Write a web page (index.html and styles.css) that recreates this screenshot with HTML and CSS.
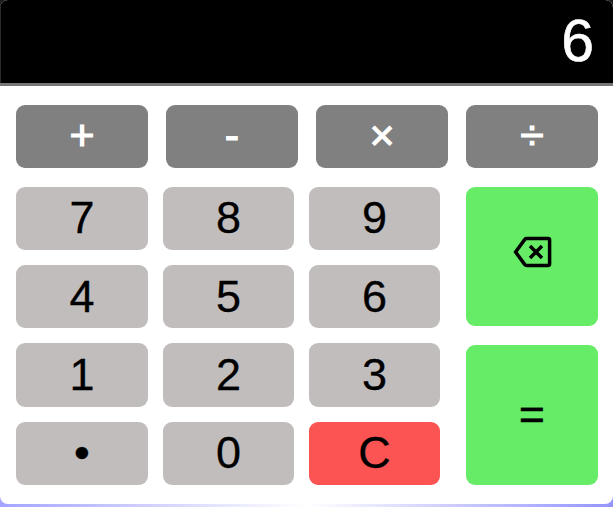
FILE: index.html
```html
<!DOCTYPE html>
<html lang="en">
<head>
<meta charset="utf-8">
<title>Calculator</title>
<link rel="stylesheet" href="styles.css">
</head>
<body>
<main class="calculator">
  <div class="display">6</div>
  <div class="keys">
    <div class="operators">
      <button class="key operator">+</button>
      <button class="key operator">-</button>
      <button class="key operator">×</button>
      <button class="key operator">÷</button>
    </div>
    <div class="pad">
      <div class="digits">
        <button class="key raised">7</button>
        <button class="key raised">8</button>
        <button class="key raised">9</button>
        <button class="key">4</button>
        <button class="key">5</button>
        <button class="key">6</button>
        <button class="key">1</button>
        <button class="key">2</button>
        <button class="key">3</button>
        <button class="key raised">•</button>
        <button class="key raised">0</button>
        <button class="key clear raised">C</button>
      </div>
      <div class="actions">
        <button class="key action" aria-label="Delete">
          <svg class="delete-icon" viewBox="0 0 40 32" fill="none" stroke="#000" stroke-width="3.5">
            <path d="M13.5 2.6H35Q36.6 2.6 36.6 4V28Q36.6 29.4 35 29.4H13.5Q12.5 29.4 11.8 28.6L2.6 16L11.8 3.4Q12.5 2.6 13.5 2.6Z"/>
            <path d="M17 10L29 22M29 10L17 22"/>
          </svg>
        </button>
        <button class="key action raised">=</button>
      </div>
    </div>
  </div>
</main>
</body>
</html>
```
FILE: styles.css
```css
* { box-sizing: border-box; }

body {
  margin: 0;
  height: 507px;
  overflow: hidden;
  background:
    linear-gradient(#1c1c1c, #1c1c1c) 0 0 / 100% 20px no-repeat,
    linear-gradient(90deg, #a4a4ff, #fff 50%, #9494ff);
  font-family: "Liberation Sans", Arial, sans-serif;
}

.calculator {
  height: 504px;
  border-radius: 8px;
  background: #fff;
  overflow: hidden;
}

.display {
  height: 86px;
  padding: 0 19px 0 0;
  border-bottom: 3px solid #767676;
  background: #000;
  box-shadow: inset 1px 0 #2b2b2b;
  color: #fff;
  font-size: 59px;
  line-height: 83px;
  text-align: right;
  -webkit-text-stroke: 0.6px currentColor;
}

.keys {
  display: flex;
  flex-direction: column;
  gap: 19px;
  padding: 19px 15px 19px 16px;
}

.operators {
  display: grid;
  grid-template-columns: repeat(4, 132px);
  gap: 18px;
  height: 63px;
}

.pad {
  display: flex;
  justify-content: space-between;
  height: 298px;
}

.digits {
  display: grid;
  grid-template-columns: 132px 131px 131px;
  grid-template-rows: 63px 63px 64px 63px;
  gap: 15px;
  width: 424px;
}

.actions {
  display: grid;
  grid-template-rows: 139px 140px;
  gap: 19px;
  width: 132px;
}

.key {
  display: flex;
  align-items: center;
  justify-content: center;
  min-width: 0;
  min-height: 0;
  padding: 0;
  border: 0;
  border-radius: 9px;
  background: #c1bdbc;
  color: #000;
  font-family: inherit;
  font-size: 45px;
  line-height: 52px;
  -webkit-text-stroke: 0.3px currentColor;
}

.raised { padding-bottom: 2px; }

.operator {
  padding-bottom: 4px;
  background: #808080;
  color: #fff;
  font-size: 43px;
  -webkit-text-stroke: 1.1px currentColor;
}

.clear { background: #fc5353; }
.action { background: #66ec66; }

.delete-icon {
  width: 40px;
  height: 32px;
  margin: -10px 0 0 1px;
}
```
